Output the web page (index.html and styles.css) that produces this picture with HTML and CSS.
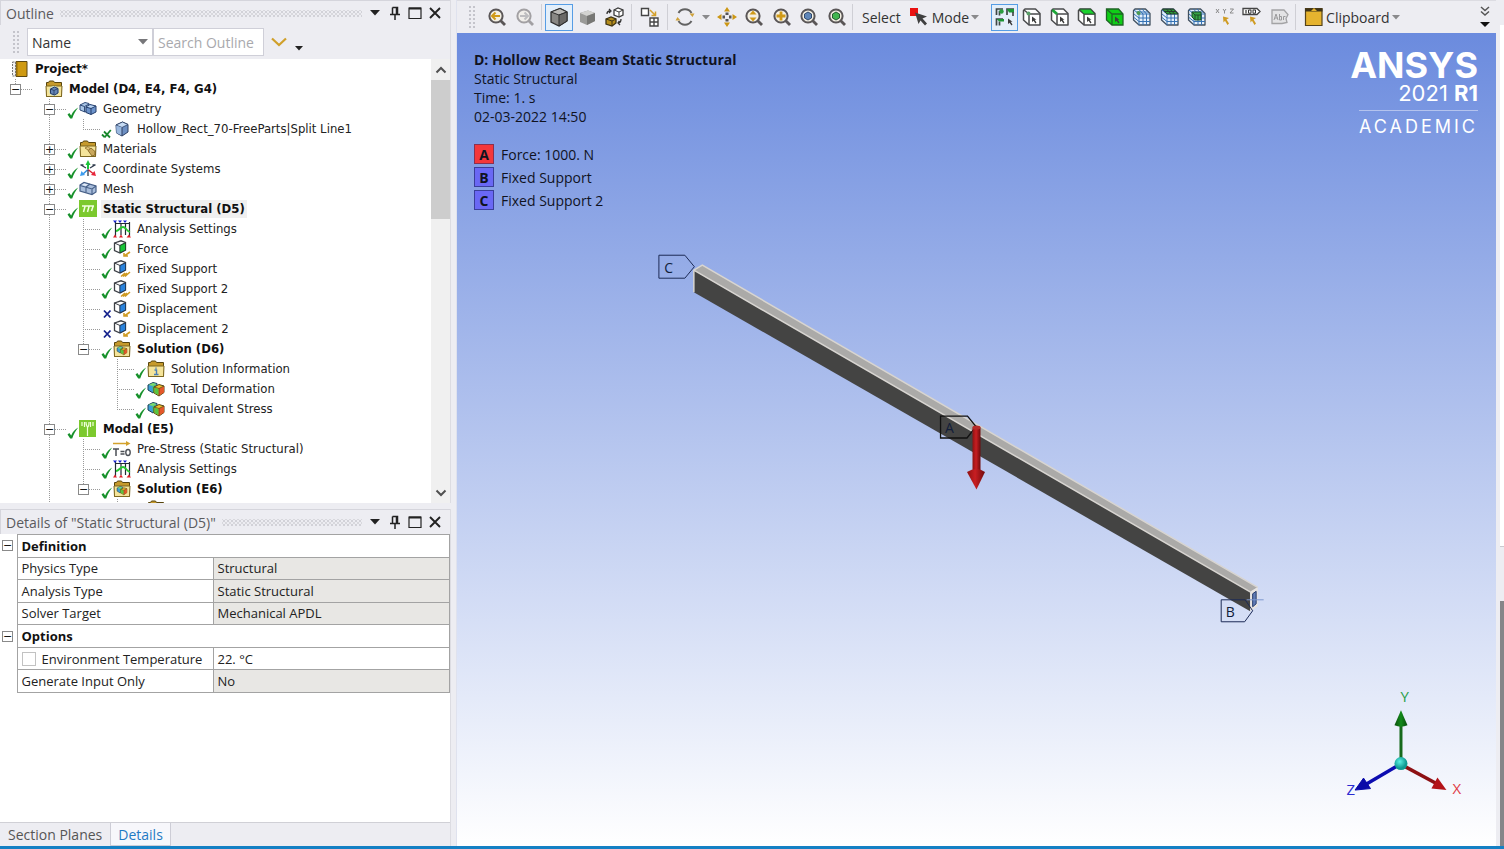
FILE: index.html
```html
<!DOCTYPE html>
<html lang="en">
<head>
<meta charset="utf-8">
<title>Mechanical - Static Structural</title>
<link rel="stylesheet" href="styles.css">
</head>
<body>
<svg class="defs" aria-hidden="true">
  <defs>
    <symbol id="i-check" viewBox="0 0 12 12"><path d="M.5 7.500 2.300 6 4.200 8.400C5.800 5 8 2.200 11.200.6 8.600 4 6.800 7 5.200 11.600L3.200 11.600Z" fill="#17912b"/></symbol>
    <symbol id="i-cross" viewBox="0 0 12 12"><path d="M3 3.500 9.500 10.500M9.500 3.500 3 10.500" stroke="#14218c" stroke-width="1.800" fill="none"/></symbol>
    <symbol id="i-checkx" viewBox="0 0 12 12"><path d="M3 4.500 9 10.500M9.800 3 3.500 10.500M1 7.500 3.500 10" stroke="#17872b" stroke-width="1.800" fill="none"/></symbol>
    <symbol id="i-book" viewBox="0 0 18 18"><path d="M5 1.500h11v15H5z" fill="#cf9a12" stroke="#5c4712" stroke-width="1"/><path d="M1.500 2h3v14h-3z" fill="#f1f1f1" stroke="#777" stroke-dasharray="2 1"/><path d="M6 1.500v15" stroke="#8e6a0c"/></symbol>
    <symbol id="i-folder" viewBox="0 0 18 18"><path d="M1.500 6V2.500h2l1-1.500h4l1 1.500h7V16.500h-15Z" fill="#c69a2c" stroke="#57450f"/><path d="M1 6h16l-.5 10.500h-15Z" fill="#f5e49a" stroke="#7d671f"/></symbol>
    <symbol id="i-cube" viewBox="0 0 18 18"><path d="M3 5 9.500 2 15 4.500V12L9 16 3.500 13Z" fill="#6d8fc2" stroke="#2c3f63"/><path d="M3 5 9.500 2 15 4.500 9 7.500Z" fill="#c6dbf3" stroke="#2c3f63" stroke-width=".8"/><path d="M3.200 5.500 9 7.500V15.500L3.500 13Z" fill="#9ab8de"/><path d="M9 7.500V16" stroke="#2c3f63"/></symbol>
    <symbol id="i-model" viewBox="0 0 18 18"><use href="#i-folder"/><circle cx="9" cy="11" r="5" fill="#c9dcc9"/><path d="M5.500 9 9.500 7l3.500 1.500V13L9.500 15l-4-1.500Z" fill="#6485b6" stroke="#263a60"/><path d="M5.500 9 9 10.500 13 8.500M9 10.500V15" stroke="#263a60" stroke-width=".8" fill="none"/></symbol>
    <symbol id="i-geom" viewBox="0 0 18 18"><path d="M1 5 6 2.500l4 1V10l-4 2-5-2Z" fill="#aac6e6" stroke="#314c79"/><path d="M1 5 5.500 6.500 10 4M5.500 6.500V12" stroke="#314c79" fill="none"/><path d="M7 7 11 4.500l6 1.500v6l-5 2.500-5-2Z" fill="#6c93cb" stroke="#263f6b"/><path d="M7 7 12 8.500 17 6M12 8.500v6" stroke="#263f6b" fill="none"/><path d="M8 6.800 11 5.200l4.500 1L12 7.800Z" fill="#bdd6f2"/></symbol>
    <symbol id="i-mesh" viewBox="0 0 18 18"><path d="M1 5 5 2.500 17 6v6l-4 2.500L1 11Z" fill="#a8bddb" stroke="#465f87" stroke-width="1.200"/><path d="M1 5.500 13 9 17 6M13 9v5.500M7 7v5.500M7 7 11 4" stroke="#465f87" stroke-width="1.100" fill="none"/><path d="M3 5 5.200 3.400 9 4.500 6.500 6Z" fill="#e4edf8"/></symbol>
    <symbol id="i-mat" viewBox="0 0 18 18"><use href="#i-folder"/><path d="M6 8 9 6.500l3 3V13l-3-3Z" fill="#e2c77c" stroke="#8a6b25" stroke-width=".8"/><path d="M9 10.500 12 8l4 3.500V15l-3 1Z" fill="#c9a85c" stroke="#7a5c1c" stroke-width=".8"/></symbol>
    <symbol id="i-cs" viewBox="0 0 18 18"><path d="M9 9V4" stroke="#1cc43a" stroke-width="2"/><path d="M6.500 5 9 0l2.500 5Z" fill="#1cc43a"/><path d="M9 9.500 4 14" stroke="#2e8de0" stroke-width="1.500"/><path d="M1 16l1.500-5 3.500 4Z" fill="#3d9df0"/><path d="M9 9.500l5 4" stroke="#d8232f" stroke-width="1.500"/><path d="M17 16l-1.500-5-3.500 4Z" fill="#e8253a"/><path d="M2 5l5 3M16 5l-5 3M9 10v6M1.500 5l3 0M16.500 5l-3 0" stroke="#2f3b4c" stroke-width="1.300"/></symbol>
    <symbol id="i-static" viewBox="0 0 18 18"><path d="M0 0h18v17H0z" fill="#7cc92e"/><path d="M3 6h12M6 6.500 4.500 12M10 6.500 8.500 12M14 6.500 12.500 11" stroke="#f3ffe2" stroke-width="1.500" fill="none"/></symbol>
    <symbol id="i-modal" viewBox="0 0 18 18"><path d="M0 0h17v17H0z" fill="#7cc92e"/><path d="M3 2v4M5.500 2v5M11.500 2v5M14 2v4M7 2c0 4 1 4 1.500 5v9M10 2c0 4-.5 4-1 5" stroke="#f0ffda" stroke-width="1.200" fill="none"/></symbol>
    <symbol id="i-anal" viewBox="0 0 18 18"><path d="M2.500 2v14M8 3v12M12.500 3v12M16.500 2v14M2 3.500h15" stroke="#222b35" stroke-width="1.200" fill="none"/><path d="M0 .5h4L2 3ZM5 .5h4L7 3ZM10 .5h4L12 3Z" fill="#1822cf"/><path d="M0 17.500 2 14.500 4 17.500ZM6 17.500 8 14.500 10 17.500ZM13.500 17.500 16 14.500 18 17.500Z" fill="#e0202a"/><path d="M3 11C6 11 7 7 10 7s3 4 7 5" stroke="#27c832" stroke-width="1.800" fill="none"/></symbol>
    <symbol id="i-box" viewBox="0 0 18 18"><path d="M1.500 3 8 .8 12.500 2.500V10L7 13 1.500 10.500Z" fill="#fff" stroke="#3d4046" stroke-width="1.300"/><path d="M1.500 3 7 5.500V13M7 5.500 12.500 2.500" stroke="#3d4046" fill="none"/></symbol>
    <symbol id="i-force" viewBox="0 0 18 18"><use href="#i-box"/><path d="M7 5.500 12.500 3v7L7 12.800Z" fill="#18c437" stroke="#1b4424" stroke-width=".8"/><path d="M17 12 12 15.500M15 16H11V13" stroke="#cf9b22" stroke-width="1.600" fill="none"/></symbol>
    <symbol id="i-fix" viewBox="0 0 18 18"><use href="#i-box"/><path d="M7 5.500 12.500 3v7L7 12.800Z" fill="#2a83dc" stroke="#1b3454" stroke-width=".8"/><path d="M8 16.500 12 13M12 16.500 17 12M10 16.500 14 13" stroke="#cf9b22" stroke-width="1.500" fill="none"/></symbol>
    <symbol id="i-disp" viewBox="0 0 18 18"><use href="#i-box"/><path d="M7 5.500 12.500 3v7L7 12.800Z" fill="#2a83dc" stroke="#1b3454" stroke-width=".8"/><path d="M17 12 12 15.500M15 16H11V13" stroke="#cf9b22" stroke-width="1.600" fill="none"/></symbol>
    <symbol id="i-result" viewBox="0 0 18 18"><path d="M1 5 6 2.500l4 1V10l-4 3-5-3Z" fill="#3c9dd6" stroke="#1c4058"/><path d="M1.500 5 6 3l3.500 1L6 6Z" fill="#7bdc68"/><path d="M5.500 6.500 9 5v6l-3 1.500Z" fill="#46c854"/><path d="M7 7 12 4.500 17 6v6.500L12 16l-5-3Z" fill="#f0be2a" stroke="#554413"/><path d="M12 8.500 17 6.200v6.300L12 15.500Z" fill="#e4572a"/><path d="M7.500 7.500 11.500 9v6L7.500 13Z" fill="#55c542"/><path d="M7 7 12 8.500 17 6M12 8.500v7" stroke="#4a421b" stroke-width=".7" fill="none"/></symbol>
    <symbol id="i-sol" viewBox="0 0 18 18"><use href="#i-folder"/><use href="#i-result" x="3" y="5" width="12" height="11"/></symbol>
    <symbol id="i-info" viewBox="0 0 18 18"><use href="#i-folder"/><path d="M7.500 10h2v4.500M7 14.500h4.500M9 7.500v1.200" stroke="#4a7eb5" stroke-width="1.400" fill="none"/></symbol>
    <symbol id="i-pre" viewBox="0 0 18 18"><path d="M0 3.500h14" stroke="#d3a22c" stroke-width="1.500"/><path d="M13 1l4.500 2.500L13 6Z" fill="#d3a22c"/><path d="M0 9h6M3 9v7M7.500 11.500h4M7.500 14h4" stroke="#4b4f55" stroke-width="1.500" fill="none"/><ellipse cx="15" cy="12.500" rx="2.200" ry="3" fill="none" stroke="#4b4f55" stroke-width="1.400"/></symbol>
    <symbol id="i-lens" viewBox="0 0 20 20"><path d="M13.500 13.500 18 18" stroke="#5a5657" stroke-width="2.800"/><circle cx="9" cy="9" r="6.600" fill="#f4f0e4" stroke="#5a5657" stroke-width="2"/></symbol>
    <symbol id="i-pin" viewBox="0 0 14 14"><path d="M4.500 1.500h5V8M4.500 1.500V8M8.500 2v6M2 8.500h10M7 9v5" stroke="#222" stroke-width="1.500" fill="none"/></symbol>
    <symbol id="i-max" viewBox="0 0 14 14"><path d="M1 2h12v10.500H1z" stroke="#222" stroke-width="1.200" fill="none"/><path d="M1 2.500h12" stroke="#222" stroke-width="2"/></symbol>
    <symbol id="i-close" viewBox="0 0 14 14"><path d="M2 2 12 12M12 2 2 12" stroke="#222" stroke-width="1.900" fill="none"/></symbol>
    <symbol id="i-down" viewBox="0 0 10 6"><path d="M0 0h10L5 5.500Z" fill="currentColor"/></symbol>
    <symbol id="i-sel" viewBox="0 0 20 20"><path d="M1.500 3.500 3 2H13.500L18 6.500V18H7L1.500 13Z" fill="#fff" stroke="#4a4b4d" stroke-width="1.500" stroke-linejoin="round"/><path d="M2 3 7 7V18M7 7h11" fill="none" stroke="#4a4b4d" stroke-width="1.500"/></symbol>
    <symbol id="i-ptr" viewBox="0 0 20 20"><path d="M10 9.500V15L11.500 13.700 13.500 16.500 14.500 15.500 12.700 12.700H14.500Z" fill="#3c3c3c"/></symbol>
    <symbol id="i-grid" viewBox="0 0 20 20"><path d="M1.500 3.500 3 2H13.500L18 6.500V18H7L1.500 13Z" fill="#e3effb" stroke="#41505f" stroke-width="1.300" stroke-linejoin="round"/><path d="M2 3 7 7V18M7 7h11M11 7V18M14.500 7V18M7 11H18M7 14.500H18M2 7 7 11M2 10.500 7 14.500M6.500 2 11 7M10 2 14.500 7M4.500 5H16" stroke="#3673b5" stroke-width="1" fill="none"/></symbol>
  </defs>
</svg>

<main class="app">
  <aside class="side">
    <section class="pane outline">
      <header class="pane-title">
        <h2>Outline</h2><span class="grip"></span>
        <button aria-label="Window menu"><svg class="tri"><use href="#i-down"/></svg></button>
        <button aria-label="Pin outline"><svg><use href="#i-pin"/></svg></button>
        <button aria-label="Maximize outline"><svg><use href="#i-max"/></svg></button>
        <button aria-label="Close outline"><svg><use href="#i-close"/></svg></button>
      </header>
      <div class="search-bar">
        <span class="vgrip"></span>
        <span class="pick"><select aria-label="Search by"><option>Name</option></select><svg><use href="#i-down"/></svg></span>
        <input type="text" placeholder="Search Outline" aria-label="Search Outline">
        <button class="expand" aria-label="Expand"><svg viewBox="0 0 16 10"><path d="M1 1.500 8 8 15 1.500" fill="none" stroke="#d0a02b" stroke-width="2.200"/></svg></button>
        <button class="more" aria-label="More options"><svg class="tri"><use href="#i-down"/></svg></button>
      </div>
      <div class="tree-wrap">
        <div class="tree">
          <div class="root"><svg class="ico"><use href="#i-book"/></svg><span class="label bold">Project*</span></div>
          <ul class="top">
            <li>
              <div class="row"><button class="tog" aria-label="Collapse Model">−</button><i></i><b></b><svg class="ico"><use href="#i-model"/></svg><span class="label bold">Model (D4, E4, F4, G4)</span></div>
              <ul class="cont">
                <li>
                  <div class="row"><button class="tog" aria-label="Collapse Geometry">−</button><i></i><svg class="st"><use href="#i-check"/></svg><svg class="ico"><use href="#i-geom"/></svg><span class="label">Geometry</span></div>
                  <ul><li><div class="row"><em></em><i></i><svg class="st"><use href="#i-checkx"/></svg><svg class="ico"><use href="#i-cube"/></svg><span class="label">Hollow_Rect_70-FreeParts|Split Line1</span></div></li></ul>
                </li>
                <li><div class="row"><button class="tog" aria-label="Expand Materials">+</button><i></i><svg class="st"><use href="#i-check"/></svg><svg class="ico"><use href="#i-mat"/></svg><span class="label">Materials</span></div></li>
                <li><div class="row"><button class="tog" aria-label="Expand Coordinate Systems">+</button><i></i><svg class="st"><use href="#i-check"/></svg><svg class="ico"><use href="#i-cs"/></svg><span class="label">Coordinate Systems</span></div></li>
                <li><div class="row"><button class="tog" aria-label="Expand Mesh">+</button><i></i><svg class="st"><use href="#i-check"/></svg><svg class="ico"><use href="#i-mesh"/></svg><span class="label">Mesh</span></div></li>
                <li>
                  <div class="row"><button class="tog" aria-label="Collapse Static Structural">−</button><i></i><svg class="st"><use href="#i-check"/></svg><svg class="ico"><use href="#i-static"/></svg><span class="label bold selected">Static Structural (D5)</span></div>
                  <ul>
                    <li><div class="row"><em></em><i></i><svg class="st"><use href="#i-check"/></svg><svg class="ico"><use href="#i-anal"/></svg><span class="label">Analysis Settings</span></div></li>
                    <li><div class="row"><em></em><i></i><svg class="st"><use href="#i-check"/></svg><svg class="ico"><use href="#i-force"/></svg><span class="label">Force</span></div></li>
                    <li><div class="row"><em></em><i></i><svg class="st"><use href="#i-check"/></svg><svg class="ico"><use href="#i-fix"/></svg><span class="label">Fixed Support</span></div></li>
                    <li><div class="row"><em></em><i></i><svg class="st"><use href="#i-check"/></svg><svg class="ico"><use href="#i-fix"/></svg><span class="label">Fixed Support 2</span></div></li>
                    <li><div class="row"><em></em><i></i><svg class="st"><use href="#i-cross"/></svg><svg class="ico"><use href="#i-disp"/></svg><span class="label">Displacement</span></div></li>
                    <li><div class="row"><em></em><i></i><svg class="st"><use href="#i-cross"/></svg><svg class="ico"><use href="#i-disp"/></svg><span class="label">Displacement 2</span></div></li>
                    <li>
                      <div class="row"><button class="tog" aria-label="Collapse Solution D6">−</button><i></i><svg class="st"><use href="#i-check"/></svg><svg class="ico"><use href="#i-sol"/></svg><span class="label bold">Solution (D6)</span></div>
                      <ul>
                        <li><div class="row"><em></em><i></i><svg class="st"><use href="#i-check"/></svg><svg class="ico"><use href="#i-info"/></svg><span class="label">Solution Information</span></div></li>
                        <li><div class="row"><em></em><i></i><svg class="st"><use href="#i-check"/></svg><svg class="ico"><use href="#i-result"/></svg><span class="label">Total Deformation</span></div></li>
                        <li><div class="row"><em></em><i></i><svg class="st"><use href="#i-check"/></svg><svg class="ico"><use href="#i-result"/></svg><span class="label">Equivalent Stress</span></div></li>
                      </ul>
                    </li>
                  </ul>
                </li>
                <li>
                  <div class="row"><button class="tog" aria-label="Collapse Modal">−</button><i></i><svg class="st"><use href="#i-check"/></svg><svg class="ico"><use href="#i-modal"/></svg><span class="label bold">Modal (E5)</span></div>
                  <ul>
                    <li><div class="row"><em></em><i></i><svg class="st"><use href="#i-check"/></svg><svg class="ico"><use href="#i-pre"/></svg><span class="label">Pre-Stress (Static Structural)</span></div></li>
                    <li><div class="row"><em></em><i></i><svg class="st"><use href="#i-check"/></svg><svg class="ico"><use href="#i-anal"/></svg><span class="label">Analysis Settings</span></div></li>
                    <li>
                      <div class="row"><button class="tog" aria-label="Collapse Solution E6">−</button><i></i><svg class="st"><use href="#i-check"/></svg><svg class="ico"><use href="#i-sol"/></svg><span class="label bold">Solution (E6)</span></div>
                      <ul><li><div class="row"><em></em><i></i><b></b><svg class="ico"><use href="#i-info"/></svg><span class="label">Solution Information</span></div></li></ul>
                    </li>
                  </ul>
                </li>
              </ul>
            </li>
          </ul>
        </div>
        <div class="scroll">
          <button aria-label="Scroll up"><svg viewBox="0 0 12 8"><path d="M1.500 6.500 6 2 10.500 6.500" fill="none" stroke="#505050" stroke-width="2"/></svg></button>
          <span class="thumb"></span>
          <button aria-label="Scroll down"><svg viewBox="0 0 12 8"><path d="M1.500 1.500 6 6 10.500 1.500" fill="none" stroke="#505050" stroke-width="2"/></svg></button>
        </div>
      </div>
    </section>

    <section class="pane details">
      <header class="pane-title">
        <h2>Details of "Static Structural (D5)"</h2><span class="grip"></span>
        <button aria-label="Details menu"><svg class="tri"><use href="#i-down"/></svg></button>
        <button aria-label="Pin details"><svg><use href="#i-pin"/></svg></button>
        <button aria-label="Maximize details"><svg><use href="#i-max"/></svg></button>
        <button aria-label="Close details"><svg><use href="#i-close"/></svg></button>
      </header>
      <div class="details-body">
        <table>
          <colgroup><col class="c-gut"><col class="c-key"><col></colgroup>
          <tbody>
          <tr><td class="gut"><button class="tog" aria-label="Collapse Definition">−</button></td><th colspan="2">Definition</th></tr>
          <tr><td class="gut"></td><td>Physics Type</td><td class="ro">Structural</td></tr>
          <tr><td class="gut"></td><td>Analysis Type</td><td class="ro">Static Structural</td></tr>
          <tr><td class="gut"></td><td>Solver Target</td><td class="ro">Mechanical APDL</td></tr>
          <tr><td class="gut"><button class="tog" aria-label="Collapse Options">−</button></td><th colspan="2">Options</th></tr>
          <tr><td class="gut"></td><td><label><input type="checkbox">Environment Temperature</label></td><td>22. °C</td></tr>
          <tr><td class="gut"></td><td>Generate Input Only</td><td class="ro">No</td></tr>
          </tbody>
        </table>
      </div>
      <nav class="tabs"><button>Section Planes</button><button class="active">Details</button></nav>
    </section>
  </aside>

  <section class="work">
    <div class="toolbar">
      <span class="vgrip"></span>
      <button class="tb first" aria-label="Previous view"><svg><use href="#i-lens"/><path d="M5 9h8M8.500 5.500 5 9l3.500 3.500" stroke="#d09a18" stroke-width="2" fill="none"/></svg></button>
      <button class="tb" aria-label="Next view"><svg class="dim"><use href="#i-lens"/><path d="M5 9h8M9.500 5.500 13 9l-3.500 3.500" stroke="#8f8f8f" stroke-width="2" fill="none"/></svg></button>
      <span class="sep"></span>
      <button class="tb on" aria-label="Shaded exterior and edges"><svg><path d="M2 5 11 1.500 18 5V14L10 19 2 15Z" fill="#888784" stroke="#2f2f2f" stroke-width="1.300"/><path d="M2 5 11 1.500 18 5 10 8Z" fill="#b9b8b5" stroke="#2f2f2f"/><path d="M10 8 18 5v9l-8 5Z" fill="#6a6967" stroke="#2f2f2f"/></svg></button>
      <button class="tb" aria-label="Shaded exterior"><svg><path d="M3 6 11 3.500 18 6V14L10 18 3 15Z" fill="#9a9a98"/><path d="M3 6 11 3.500 18 6 10 9Z" fill="#d3d3d1"/><path d="M10 9 18 6v8l-8 4Z" fill="#777775"/></svg></button>
      <button class="tb" aria-label="Wireframe toggle"><svg><path d="M1 12 6 10l5 2v4l-4 3-6-2Z" fill="#b58d1d" stroke="#3d3314" stroke-width="1.300"/><path d="M1 12 7 14 11 12M7 14v5" stroke="#3d3314" fill="none"/><path d="M9 3 13 1l5 2v5l-4 2-5-2Z" fill="#fff" stroke="#3c3c3c" stroke-width="1.300"/><path d="M9 3 14 5 18 3M14 5v5" stroke="#3c3c3c" fill="none"/><path d="M2 7C2 5 3 4 5 4M4 2 6 4 4 6M16 12c0 3-1 4-3 4M14.500 14 13 16l2 2" stroke="#333" stroke-width="1.300" fill="none"/></svg></button>
      <span class="sep"></span>
      <button class="tb narrow" aria-label="Show mesh"><svg><path d="M1.500 1.500h7v7h-7z" fill="#fff" stroke="#454545" stroke-width="1.400"/><path d="M10 11h8v8h-8zM14 11v8M10 15h8" fill="#fff" stroke="#454545" stroke-width="1.400"/><path d="M10 3 15 8M15.500 4.500V8.500H11.500" stroke="#d3a02a" stroke-width="1.500" fill="none"/></svg></button>
      <span class="sep"></span>
      <button class="tb orbit" aria-label="Rotate"><svg><path d="M3.500 6A7.600 7.600 0 0 1 16.500 6M16.500 14A7.600 7.600 0 0 1 3.500 14" stroke="#626262" stroke-width="2" fill="none"/><path d="M14.500 6.500h5L17.500 10ZM5.500 13.500h-5L2.500 10Z" fill="#cfa23a"/></svg></button>
      <button class="drop" aria-label="Rotate options"><svg class="tri small"><use href="#i-down"/></svg></button>
      <div class="group views">
        <button class="tb" aria-label="Pan"><svg><path d="M10 0 13 4.500H7ZM10 20 7 15.500h6ZM0 10 4.500 7v6ZM20 10 15.500 13V7Z" fill="#cc9714"/><path d="M8.500 5.500h3v2.500h-3zM8.500 12h3v2.500h-3zM5.500 8.500h2.500v3H5.500zM12 8.500h2.500v3H12z" fill="#555"/></svg></button>
        <button class="tb" aria-label="Zoom"><svg><use href="#i-lens"/><path d="M9 3.500 12.500 7.500h-7ZM9 14.500 5.500 10.500h7Z" fill="#d09a18"/></svg></button>
        <button class="tb" aria-label="Zoom in"><svg><use href="#i-lens"/><path d="M9 4.500v9M4.500 9h9" stroke="#d09a18" stroke-width="2.800"/></svg></button>
        <button class="tb" aria-label="Zoom to fit"><svg><use href="#i-lens"/><path d="M5.500 7 9 5l3.500 2v4L9 13l-3.500-2Z" fill="#5f86b8" stroke="#30496d"/></svg></button>
        <button class="tb" aria-label="Zoom to selection"><svg><use href="#i-lens"/><path d="M5.500 7 9 5l3.500 2v4L9 13l-3.500-2Z" fill="#41b54e" stroke="#245c2f"/></svg></button>
      </div>
      <span class="sep"></span>
      <span class="select-text">Select</span>
      <button class="mode"><svg><path d="M0 1h8v8H0z" fill="#e91111"/><path d="M5 5.500 17 9.500 12.500 11.500 17 16.500 15 18.500 10.500 13.500 8.500 17Z" fill="#404040"/></svg>Mode<svg class="tri small"><use href="#i-down"/></svg></button>
      <div class="group picks">
        <button class="tb on" aria-label="Auto select"><svg><path d="M1.500 8V2H8M4.500 8.500V4.500H8M12 8V2h7M1.500 18.500V12H8M4.500 18.500v-4" stroke="#3e4744" stroke-width="1.700" fill="none"/><path d="M12 2h7v3.500h-5ZM2 12h7v2.500H4Z" fill="#1d9635"/><circle cx="6.500" cy="4.500" r="2.200" fill="#2b9c40"/><path d="M18 9V5" stroke="#333" stroke-width="1.500"/><use href="#i-ptr" x="3" y="2" width="20" height="20"/></svg></button>
        <button class="tb" aria-label="Select vertex"><svg><use href="#i-sel"/><circle cx="6.500" cy="6.500" r="2" fill="#5a9f69"/><use href="#i-ptr"/></svg></button>
        <button class="tb" aria-label="Select edge"><svg><use href="#i-sel"/><path d="M2.500 3 7 7" stroke="#1ca637" stroke-width="2.800"/><use href="#i-ptr"/></svg></button>
        <button class="tb" aria-label="Select face"><svg><use href="#i-sel"/><path d="M2.500 2.200H13.500L18 7H7Z" fill="#1bd12e" stroke="#285b30"/><use href="#i-ptr"/></svg></button>
        <button class="tb" aria-label="Select body"><svg><path d="M1.500 2h12l4.500 5v11H7L1.500 13Z" fill="#0fce17" stroke="#1f6326" stroke-width="1.300"/><path d="M2 2.500 7 7V18M7 7h11" stroke="#1f6326" stroke-width="1.300" fill="none"/><use href="#i-ptr"/></svg></button>
        <button class="tb" aria-label="Select node"><svg><use href="#i-grid"/><circle cx="6.500" cy="6" r="2" fill="#4a9a52"/></svg></button>
        <button class="tb" aria-label="Select element face"><svg><use href="#i-grid"/><path d="M2.500 2.200H13.500L18 7H7Z" fill="#2c9b3a" stroke="#23402a"/><path d="M4.500 4.500h11M6.500 2 11 7M10 2l4.500 5" stroke="#23402a"/></svg></button>
        <button class="tb" aria-label="Select element"><svg><use href="#i-grid"/><path d="M5 5h9v8H8L5 10Z" fill="#35a445" stroke="#1d4f27"/><path d="M5 5 8 8h6M8 8v5M11 8v5" stroke="#1d4f27" fill="none"/></svg></button>
        <button class="tb" aria-label="Coordinates"><svg><path d="M1 2 4 6M4 2 1 6M8 2l1.500 2L11 2M9.500 4v2.500M15 2h3.500L15 6h3.500" stroke="#8a8a8a" stroke-width="1" fill="none"/><path d="M8 9.500 14 11 11.500 12.500 14 16.500 12.500 18 10 13.800 8.500 15.500Z" fill="#cf9b22"/></svg></button>
        <button class="tb" aria-label="Probe label"><svg><path d="M1 1.500h14l3 3-3 3H1Z" fill="#fff" stroke="#444" stroke-width="1.300"/><path d="M4 3v3.500" stroke="#333" stroke-width="1.200"/><path d="M6.500 3h2.500v3.200H6.500zM11 3h2.500v3.200H11z" stroke="#333" fill="none"/><path d="M8 9.500 14 11 11.500 12.500 14 16.500 12.500 18 10 13.800 8.500 15.500Z" fill="#cf9b22"/></svg></button>
        <button class="tb" aria-label="Annotation" disabled><svg><path d="M2 3h12l4 4.500-2 4 1 4-5 1H2Z" fill="#e3e3e5" stroke="#a3a3a5" stroke-width="1.300"/><path d="M4 13 6 7l2 6M5 11h2.500M9.500 7v6h2V9.500h-2M13.500 13V9.500h2" stroke="#9b9b9d" fill="none"/></svg></button>
      </div>
      <span class="sep"></span>
      <button class="mode clip"><svg><path d="M1.500 1.500h16.500v17H1.500z" fill="#e5b32f" stroke="#55431a" stroke-width="1.200"/><path d="M1 3h17.500" stroke="#3f3419" stroke-width="3"/><path d="M7 4 10 1 13 4Z" fill="#e5b32f"/></svg>Clipboard<svg class="tri small"><use href="#i-down"/></svg></button>
      <button class="overflow" aria-label="More toolbar commands"><svg viewBox="0 0 12 24"><path d="M2 2 6 5.500 10 2M2 6.500 6 10 10 6.500" stroke="#555" stroke-width="1.500" fill="none"/><path d="M1 17h10L6 22Z" fill="#111"/></svg></button>
    </div>

    <div class="viewport">
      <svg class="scene" viewBox="457 33 1039 814" role="img" aria-label="Hollow rectangular beam with loads">
        <defs>
          <linearGradient id="g-red"><stop offset="0" stop-color="#8d1212"/><stop offset=".45" stop-color="#c81e22"/><stop offset="1" stop-color="#6e0a0c"/></linearGradient>
          <linearGradient id="g-green"><stop offset="0" stop-color="#0a4d0d"/><stop offset=".5" stop-color="#138a1a"/><stop offset="1" stop-color="#084a0b"/></linearGradient>
          <radialGradient id="g-ball" cx=".4" cy=".35"><stop offset="0" stop-color="#5cf0e4"/><stop offset="1" stop-color="#109a92"/></radialGradient>
        </defs>
        <path d="M693.500 270.500 1250.500 592V612L693.500 292.500Z" fill="#444443"/>
        <path d="M693.500 270.500 702 265 1258 588 1250.500 592.500Z" fill="#abaaa8"/>
        <path d="M693.500 292.500V270.500L702 265.500 1258 588M693.500 270.500 1250.500 592.500" fill="none" stroke="#d8d5d1" stroke-width="1.500"/>
        <path d="M1250.500 592.500 1258 588V607L1250.500 612Z" fill="#e8e4e0"/>
        <path d="M1253 594.500 1256.500 592V604.500L1253 607.500Z" fill="#5f7bb5" stroke="#273d6d"/>
        <path d="M1247 600.500h17" stroke="#7c97cf"/>
        <g fill="none" stroke="#1c2a55">
          <path d="M658.500 255.500h26L694 267l-9.500 11.500h-26Z"/>
          <path d="M940.500 416.500h27L976 427l-9 11.500h-26.500Z" stroke="#111" stroke-width="1.300"/>
          <path d="M1221.500 600.500h24L1253 611.500l-8 11h-23.500Z"/>
        </g>
        <path d="M972.500 428h8v43h-8z" fill="url(#g-red)"/>
        <ellipse cx="976.500" cy="428" rx="4" ry="2" fill="#b62a28"/>
        <path d="M967 472.500q9.500-6 18 0L976.500 490Z" fill="url(#g-red)"/>
        <g class="tags"><text x="664" y="273">C</text><text x="945" y="434">A</text><text x="1226" y="618">B</text></g>
        <path d="M1400 724h3v38h-3z" fill="#176a1c"/>
        <path d="M1401.500 711 1408 726q-6.500 3-13 0Z" fill="url(#g-green)"/>
        <path d="M1401 765 1367 785" stroke="#0c0cb0" stroke-width="3.500"/>
        <path d="M1355.500 791 1364 779l7 10.500Z" fill="#0a0aa8" stroke="#0a0aa8"/>
        <path d="M1401 765 1436 784" stroke="#8d1013" stroke-width="3.500"/>
        <path d="M1447 791 1432 789.500 1438 778.500Z" fill="#b31217"/>
        <circle cx="1401.500" cy="764.500" r="6.500" fill="url(#g-ball)"/>
        <g class="axes"><text x="1401" y="703" fill="#2da04a">Y</text><text x="1347" y="796" fill="#2a2ad0">Z</text><text x="1453" y="795" fill="#e03a44">X</text></g>
      </svg>
      <div class="caption">
        <strong>D: Hollow Rect Beam Static Structural</strong>
        <span>Static Structural</span><span>Time: 1. s</span><span>02-03-2022 14:50</span>
        <ul class="legend">
          <li><b class="red">A</b>Force: 1000. N</li>
          <li><b>B</b>Fixed Support</li>
          <li><b>C</b>Fixed Support 2</li>
        </ul>
      </div>
      <div class="brand"><span class="name">ANSYS</span><span class="ver">2021 <b>R1</b></span><span class="edition">ACADEMIC</span></div>
    </div>
  </section>

  <div class="edge"><span class="e1"></span><span class="e2"></span><span class="e3"></span><span class="e4"></span></div>
</main>
</body>
</html>
```

FILE: styles.css
```css
* { box-sizing: border-box; }
body { margin: 0; font-family: "Open Sans", "Noto Sans", sans-serif; font-size: 14px; color: #333; background: #ededf2; }
button { border: 0; padding: 0; margin: 0; background: none; font: inherit; color: inherit; display: flex; align-items: center; justify-content: center; }
ul { list-style: none; margin: 0; padding: 0; }
h2 { margin: 0; font-size: 14px; font-weight: 400; color: #5b5b5e; white-space: nowrap; }
svg { display: block; flex: none; }
.defs { position: absolute; width: 0; height: 0; }

.app { display: grid; grid-template-columns: 456px 1fr 8px; height: 100vh; border-bottom: 3px solid #1480c4; overflow: hidden; }
.side { display: grid; grid-template-rows: 503px 1fr; gap: 6px; padding-right: 5px; min-height: 0; }
.pane { display: flex; flex-direction: column; min-height: 0; border-right: 1px solid #dcdce2; }

.pane-title { display: flex; align-items: center; height: 25px; flex: none; padding: 0 5px 0 5px; border-top: 1px solid #d5d5dc; border-left: 1px solid #d5d5dc; }
.pane-title button { width: 20px; height: 20px; }
.pane-title button svg { width: 14px; height: 14px; }
.pane-title button svg.tri { width: 10px; height: 6px; color: #222; }
.grip { flex: 1; height: 7px; margin: 0 3px 0 6px; background: radial-gradient(circle, #b9b9c0 1px, transparent 1px) 0 0 / 4px 4px, radial-gradient(circle, #c4c4ca 1px, transparent 1px) 2px 2px / 4px 4px; opacity: .5; }
.vgrip { width: 7px; height: 24px; flex: none; background: radial-gradient(circle, #c4c4cb 1px, transparent 1px) 0 0 / 4px 4px; }

.search-bar { display: flex; align-items: center; height: 34px; flex: none; padding-left: 12px; }
.search-bar .vgrip { margin-right: 8px; }
.pick { display: grid; width: 126px; align-items: center; }
.pick select, .pick svg { grid-area: 1 / 1; }
.pick svg { width: 10px; height: 6px; justify-self: end; margin-right: 5px; color: #77777a; pointer-events: none; }
.pick select, .search-bar input { height: 28px; border: 1px solid #cfcfd8; background: #fff; font: inherit; color: #333; border-radius: 0; appearance: none; padding: 0 4px; }
.search-bar input { width: 111px; }
.search-bar input::placeholder { color: #a9a9ad; opacity: 1; }
.expand { width: 30px; height: 24px; }
.expand svg { width: 16px; height: 10px; }
.more { align-self: end; height: 21px; width: 10px; }
.more .tri { width: 8px; height: 5px; color: #222; }

.tree-wrap { display: flex; flex: 1; min-height: 0; background: #fff; overflow: hidden; }
.tree { flex: 1; min-width: 0; overflow: hidden; font-family: "DejaVu Sans Condensed", "DejaVu Sans", sans-serif; font-size: 13px; color: #222; }
.root, .row { display: flex; align-items: center; height: 20px; }
.root { padding-left: 11px; }
.top { padding-left: 10px; }
.tree ul ul { padding-left: 34px; }
.tree li { background: repeating-linear-gradient(#999 0 1px, #fff 1px 2px) 5px 0 / 1px 100% no-repeat; }
.tree li:last-child { background-size: 1px 10px; }
.tree .cont > li:last-child { background-size: 1px 100%; }
.row i, .row em { height: 1px; background: repeating-linear-gradient(90deg, #999 0 1px, #fff 1px 2px); }
.row i { width: 12px; }
.row em { width: 6px; margin-left: 5px; }
.row b { width: 12px; }
.tog { width: 11px; height: 11px; flex: none; border: 1px solid #8a8a8a; background: #fff; color: #111; font: 11px/9px "DejaVu Sans", sans-serif; }
.st { width: 12px; height: 12px; align-self: end; }
.ico { width: 18px; height: 18px; }
.label { margin-left: 4px; padding: 0 2px; line-height: 18px; white-space: nowrap; }
.bold { font-weight: 700; color: #111; }
.selected { background: #f0f0f0; }

.scroll { display: flex; flex-direction: column; width: 19px; background: #f0f0f0; }
.scroll button { height: 21px; }
.scroll svg { width: 12px; height: 8px; }
.scroll button:last-child { margin-top: auto; }
.thumb { height: 139px; background: #cdcdcd; }

.details-body { flex: 1; background: #fff; border-bottom: 1px solid #d0d0d6; }
table { width: 100%; height: 159px; border-collapse: collapse; table-layout: fixed; font-size: 13px; color: #222; }
td, th { border: 1px solid #a3a3a3; padding: 0 4px; text-align: left; line-height: 18px; }
th { color: #111; font-weight: 700; }
.c-gut { width: 17px; }
.c-key { width: 196px; }
td.gut { border: 0; padding: 0 0 0 2px; }
.ro { background: #e8e7e4; }
label { display: flex; align-items: center; gap: 6px; white-space: nowrap; }
label input { appearance: none; width: 14px; height: 14px; margin: 0; border: 1px solid #c2c2c2; background: #fff; }
.tabs { display: flex; height: 23px; flex: none; color: #555; }
.tabs button { padding: 0 8px; }
.tabs .active { background: #f7f7fb; color: #1f7ac4; border: 1px solid #cdcdd6; border-top: 0; padding: 0 7px; }

.work { display: flex; flex-direction: column; min-width: 0; border-left: 1px solid #dfe2ee; }
.toolbar { display: flex; align-items: center; height: 33px; flex: none; padding: 0 4px 0 11px; white-space: nowrap; border-top: 1px solid #dcdce2; }
.tb { width: 28px; height: 27px; flex: none; }
.tb svg, .mode svg { width: 20px; height: 20px; }
.tb.on { background: #e4effa; border: 1px solid #569de5; }
.dim { opacity: .5; }
.first { margin-left: 8px; }
.sep { width: 1px; height: 26px; flex: none; margin: 0 3px 0 2px; background: #cfcfd5; }
.narrow { margin: 0 1px; }
.toolbar .drop { width: 14px; height: 27px; }
.toolbar svg.tri.small { width: 8px; height: 5px; color: #8a8a8c; }
.group { display: flex; justify-content: space-between; flex: none; }
.group .tb { width: 27px; }
.views { width: 137px; }
.picks { width: 302px; }
.select-text { margin: 0 9px 0 6px; }
.mode { gap: 2px; }
.mode + .picks { margin-left: 12px; }
.clip { margin-left: 5px; }
.overflow { margin-left: auto; width: 14px; }
.overflow svg { width: 12px; height: 24px; }

.viewport { position: relative; flex: 1; min-height: 0; display: flex; justify-content: space-between; align-items: flex-start; background: linear-gradient(#6b8bde, #fff); color: #10131f; }
.scene { position: absolute; inset: 0; width: 100%; height: 100%; }
.tags { font-size: 14px; fill: #111d3a; }
.axes { font-size: 15px; }
.caption, .brand { position: relative; display: flex; flex-direction: column; }
.caption { padding: 17px 0 0 17px; line-height: 19px; }
.legend { margin-top: 15px; }
.legend li { display: flex; align-items: center; gap: 7px; height: 20px; margin-top: 3px; }
.legend b { width: 20px; height: 20px; display: grid; place-items: center; background: #6a68f5; border: 1px solid #3a3f9a; }
.legend .red { background: #f4373b; border-color: #8a3050; }
.brand { padding: 14px 18px 0 0; align-items: flex-end; color: #fff; font-family: Inter, sans-serif; }
.name { font-size: 36px; font-weight: 700; line-height: 36px; }
.ver { font-size: 22px; line-height: 20px; }
.edition { margin-top: 7px; padding-top: 4px; border-top: 1px solid #b4c3ee; font-size: 18px; line-height: 24px; letter-spacing: 3px; }

.edge { display: flex; flex-direction: column; padding-left: 4px; }
.e1 { height: 25px; }
.e2 { height: 521px; background: #fff; }
.e3 { height: 55px; border-top: 1px solid #c9c9cf; }
.e4 { flex: 1; background: #858588; }
```
